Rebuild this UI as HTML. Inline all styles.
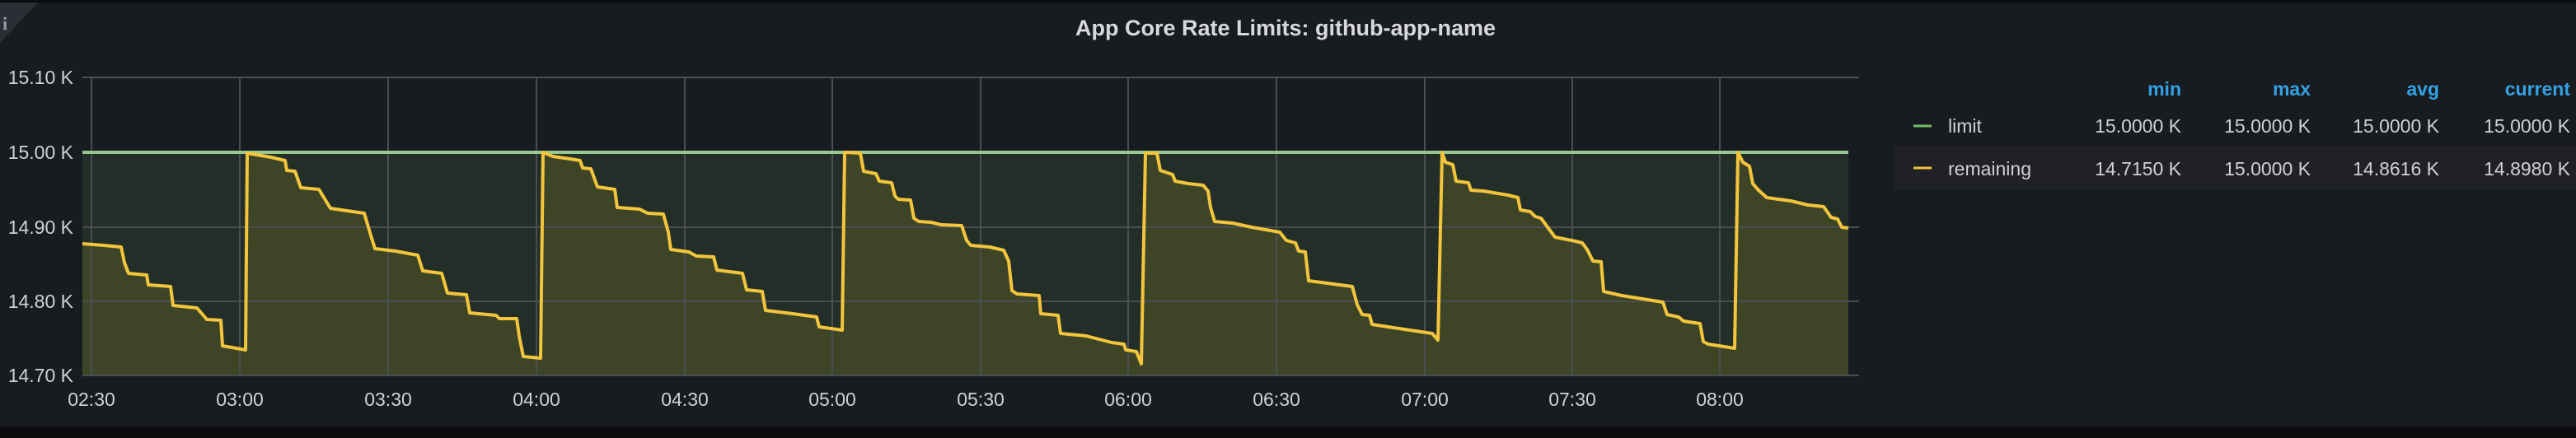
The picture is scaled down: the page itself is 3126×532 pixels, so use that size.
<!DOCTYPE html>
<html><head><meta charset="utf-8"><style>
html,body{margin:0;padding:0;background:#181b1f;}
body{width:3126px;height:532px;position:relative;overflow:hidden;font-family:"Liberation Sans",sans-serif;}
.t{position:absolute;color:#ccccdc;}
</style></head><body>
<div style="position:absolute;left:0;top:0;width:3126px;height:3px;background:#0b0c0e"></div>
<div style="position:absolute;left:0;top:518px;width:3126px;height:14px;background:#0b0c0e"></div>
<svg width="3126" height="532" style="position:absolute;left:0;top:0">
<polygon points="0,3 46,3 0,52" fill="#2b2e35"/>
<text x="3" y="36" fill="#9a9ca3" font-family="Liberation Serif" font-weight="bold" font-size="22">i</text>
<text x="1560" y="43" fill="#d8d9da" font-size="27" font-weight="bold" text-anchor="middle">App Core Rate Limits: github-app-name</text>
<g fill="#d0d1d4" font-size="23" text-anchor="end">
<text x="89" y="102">15.10 K</text><text x="89" y="193">15.00 K</text><text x="89" y="284">14.90 K</text><text x="89" y="374">14.80 K</text><text x="89" y="464">14.70 K</text>
</g>
<rect x="100" y="185" width="2143" height="271" fill="rgba(115,191,105,0.12)"/>
<polygon fill="rgba(250,222,42,0.13)" points="100,456 100,296 126,298 147,300 151,319 156,332 178,334 180,346 207,348 210,371 239,374 245,381 251,388 268,389 270,420 298,425 300,186 329,191 346,195 348,207 358,208 365,228 387,230 401,253 421,256 442,259 450,286 455,302 480,305 507,310 513,329 536,332 543,356 566,358 570,380 602,383 606,387 627,387 630,408 635,433 656,435 659,185 671,190 692,193 704,195 707,204 717,205 725,227 746,230 749,252 776,254 786,259 805,260 811,282 814,303 836,306 845,311 866,312 870,328 901,332 906,352 925,354 929,377 962,381 991,385 994,397 1022,401 1025,185 1044,186 1048,208 1063,211 1067,220 1082,222 1086,238 1090,242 1105,243 1109,265 1115,269 1130,270 1142,273 1167,274 1173,292 1178,298 1201,300 1218,304 1224,317 1228,353 1234,357 1261,359 1263,381 1284,383 1287,405 1318,408 1349,416 1364,418 1366,425 1379,427 1385,442 1390,186 1404,186 1408,207 1423,212 1426,220 1442,223 1460,225 1466,232 1469,252 1474,269 1496,271 1519,276 1553,282 1561,292 1572,295 1576,305 1584,306 1588,341 1641,348 1647,370 1653,382 1662,383 1665,394 1691,398 1738,405 1745,413 1750,185 1754,197 1763,200 1767,220 1782,222 1785,231 1800,232 1830,237 1842,240 1845,255 1857,257 1863,263 1870,265 1887,288 1912,293 1920,295 1926,303 1933,317 1943,318 1946,354 1968,359 2018,367 2023,382 2037,385 2043,390 2063,393 2067,415 2073,418 2105,423 2109,185 2115,197 2123,202 2127,223 2134,231 2144,240 2173,244 2194,249 2213,251 2222,264 2230,266 2235,276 2243,277 2243,456"/>
<g stroke="#4a4d52" stroke-width="2" fill="none">
<line x1="100" y1="94" x2="2256" y2="94"/><line x1="100" y1="276" x2="2256" y2="276"/><line x1="100" y1="366" x2="2256" y2="366"/><line x1="100" y1="456" x2="2256" y2="456"/>
<path d="M111 94V456M291 94V456M471 94V456M651 94V456M831 94V456M1010 94V456M1190 94V456M1369 94V456M1549 94V456M1729 94V456M1908 94V456M2087 94V456"/>
</g>
<line x1="100" y1="185" x2="2243" y2="185" stroke="#96c98c" stroke-width="4"/>
<polyline fill="none" stroke="#f2c53d" stroke-width="4" stroke-linejoin="round" points="100,296 126,298 147,300 151,319 156,332 178,334 180,346 207,348 210,371 239,374 245,381 251,388 268,389 270,420 298,425 300,186 329,191 346,195 348,207 358,208 365,228 387,230 401,253 421,256 442,259 450,286 455,302 480,305 507,310 513,329 536,332 543,356 566,358 570,380 602,383 606,387 627,387 630,408 635,433 656,435 659,185 671,190 692,193 704,195 707,204 717,205 725,227 746,230 749,252 776,254 786,259 805,260 811,282 814,303 836,306 845,311 866,312 870,328 901,332 906,352 925,354 929,377 962,381 991,385 994,397 1022,401 1025,185 1044,186 1048,208 1063,211 1067,220 1082,222 1086,238 1090,242 1105,243 1109,265 1115,269 1130,270 1142,273 1167,274 1173,292 1178,298 1201,300 1218,304 1224,317 1228,353 1234,357 1261,359 1263,381 1284,383 1287,405 1318,408 1349,416 1364,418 1366,425 1379,427 1385,442 1390,186 1404,186 1408,207 1423,212 1426,220 1442,223 1460,225 1466,232 1469,252 1474,269 1496,271 1519,276 1553,282 1561,292 1572,295 1576,305 1584,306 1588,341 1641,348 1647,370 1653,382 1662,383 1665,394 1691,398 1738,405 1745,413 1750,185 1754,197 1763,200 1767,220 1782,222 1785,231 1800,232 1830,237 1842,240 1845,255 1857,257 1863,263 1870,265 1887,288 1912,293 1920,295 1926,303 1933,317 1943,318 1946,354 1968,359 2018,367 2023,382 2037,385 2043,390 2063,393 2067,415 2073,418 2105,423 2109,185 2115,197 2123,202 2127,223 2134,231 2144,240 2173,244 2194,249 2213,251 2222,264 2230,266 2235,276 2243,277"/>
<g fill="#d0d1d4" font-size="23" text-anchor="middle">
<text x="111" y="493">02:30</text><text x="291" y="493">03:00</text><text x="471" y="493">03:30</text><text x="651" y="493">04:00</text><text x="831" y="493">04:30</text><text x="1010" y="493">05:00</text><text x="1190" y="493">05:30</text><text x="1369" y="493">06:00</text><text x="1549" y="493">06:30</text><text x="1729" y="493">07:00</text><text x="1908" y="493">07:30</text><text x="2087" y="493">08:00</text>
</g>
<rect x="2298" y="177" width="828" height="53" fill="#1f2126"/>
<g font-size="23" font-weight="bold" fill="#33a2e5" text-anchor="end">
<text x="2647" y="116">min</text><text x="2804" y="116">max</text><text x="2960" y="116">avg</text><text x="3119" y="116">current</text>
</g>
<line x1="2322" y1="153" x2="2344" y2="153" stroke="#73bf69" stroke-width="3"/>
<line x1="2322" y1="204" x2="2344" y2="204" stroke="#f2c53d" stroke-width="3"/>
<g font-size="23" fill="#d0d1d4">
<text x="2364" y="161">limit</text><text x="2364" y="213">remaining</text>
</g>
<g font-size="23" fill="#d0d1d4" text-anchor="end">
<text x="2647" y="161">15.0000 K</text><text x="2804" y="161">15.0000 K</text><text x="2960" y="161">15.0000 K</text><text x="3119" y="161">15.0000 K</text>
<text x="2647" y="213">14.7150 K</text><text x="2804" y="213">15.0000 K</text><text x="2960" y="213">14.8616 K</text><text x="3119" y="213">14.8980 K</text>
</g>
</svg>
</body></html>
